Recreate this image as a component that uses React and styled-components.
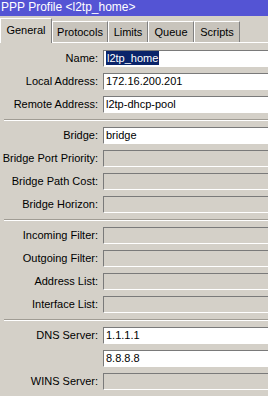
import React from "react";
import styled, { createGlobalStyle } from "styled-components";

const Global = createGlobalStyle`
  html, body { margin: 0; padding: 0; background: #d4d0c8; overflow: hidden; }
  body { font-family: "Liberation Sans", Arial, sans-serif; font-size: 11px; color: #000; }
`;

const Window = styled.div`
  width: 268px;
  height: 396px;
  overflow: hidden;
  background: #d4d0c8;
  display: flex;
  flex-direction: column;
`;

const TitleBar = styled.div`
  height: 16px;
  line-height: 15px;
  padding-left: 1px;
  background: #5454d4;
  color: #fff;
  font-size: 12px;
  white-space: nowrap;
`;

const TabStrip = styled.div`
  height: 27px;
  display: flex;
  align-items: flex-end;
  border-bottom: 1px solid #fff;
  box-sizing: border-box;
  padding-top: 2px;
`;

const Tab = styled.div`
  box-sizing: border-box;
  width: ${(p) => p.$w}px;
  height: ${(p) => (p.$active ? 25 : 21)}px;
  margin-bottom: ${(p) => (p.$active ? -1 : 0)}px;
  background: ${(p) => (p.$active ? "#d4d0c8" : "#c8c4bc")};
  border-top: 1px solid #fff;
  border-left: 1px solid #fff;
  border-right: 1px solid #808080;
  display: flex;
  align-items: center;
  justify-content: center;
  padding-bottom: ${(p) => (p.$active ? 3 : 0)}px;
  white-space: nowrap;
  position: relative;
  z-index: ${(p) => (p.$active ? 1 : 0)};
`;

const Panel = styled.div`
  padding-top: 7px;
  display: flex;
  flex-direction: column;
  gap: 6px;
`;

const Row = styled.div`
  display: grid;
  grid-template-columns: 98px 180px;
  column-gap: 5px;
  height: 17px;
`;

const Label = styled.div`
  text-align: right;
  line-height: 17px;
  white-space: nowrap;
`;

const Field = styled.div`
  box-sizing: border-box;
  height: 17px;
  background: ${(p) => (p.$disabled ? "#d4d0c8" : "#fff")};
  border-top: 1px solid #7a7a7a;
  border-left: 1px solid #7a7a7a;
  border-bottom: 1px solid #fff;
  padding-left: 2px;
  line-height: 15px;
  white-space: nowrap;
`;

const Selected = styled.span`
  background: #0a246a;
  color: #fff;
  padding: 0 1px;
  display: inline-block;
  line-height: 14px;
`;

const Separator = styled.div`
  height: 0;
  margin-left: 4px;
  border-top: 1px solid #a09c94;
  border-bottom: 1px solid #fff;
`;

const tabs = [
  { name: "General", w: 52, active: true },
  { name: "Protocols", w: 56 },
  { name: "Limits", w: 40 },
  { name: "Queue", w: 46 },
  { name: "Scripts", w: 46 },
];

const groups = [
  [
    { label: "Name:", value: "l2tp_home", selected: true },
    { label: "Local Address:", value: "172.16.200.201" },
    { label: "Remote Address:", value: "l2tp-dhcp-pool" },
  ],
  [
    { label: "Bridge:", value: "bridge" },
    { label: "Bridge Port Priority:", disabled: true },
    { label: "Bridge Path Cost:", disabled: true },
    { label: "Bridge Horizon:", disabled: true },
  ],
  [
    { label: "Incoming Filter:", disabled: true },
    { label: "Outgoing Filter:", disabled: true },
    { label: "Address List:", disabled: true },
    { label: "Interface List:", disabled: true },
  ],
  [
    { label: "DNS Server:", value: "1.1.1.1" },
    { label: "", value: "8.8.8.8" },
    { label: "WINS Server:", disabled: true },
  ],
];

export default function App() {
  return (
    <Window>
      <Global />
      <TitleBar>PPP Profile &lt;l2tp_home&gt;</TitleBar>
      <TabStrip>
        {tabs.map((t) => (
          <Tab key={t.name} $w={t.w} $active={t.active}>
            {t.name}
          </Tab>
        ))}
      </TabStrip>
      <Panel>
        {groups.map((g, gi) => (
          <React.Fragment key={gi}>
            {gi > 0 && <Separator />}
            {g.map((r, ri) => (
              <Row key={ri}>
                <Label>{r.label}</Label>
                <Field $disabled={r.disabled}>
                  {r.selected ? <Selected>{r.value}</Selected> : r.value}
                </Field>
              </Row>
            ))}
          </React.Fragment>
        ))}
      </Panel>
    </Window>
  );
}
